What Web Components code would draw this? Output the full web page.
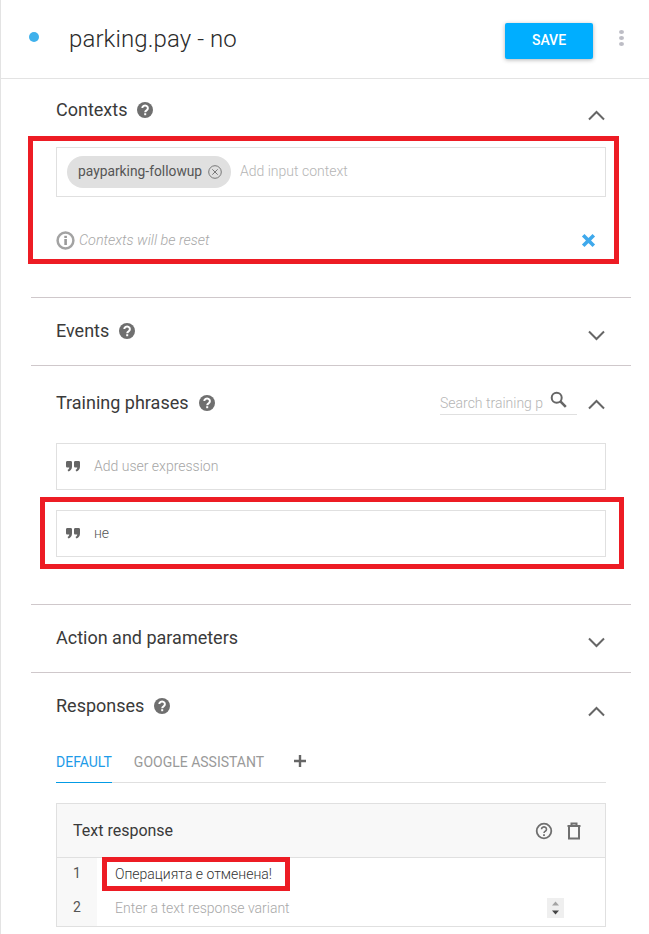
<!DOCTYPE html>
<html>
<head>
<meta charset="utf-8">
<title>parking.pay - no</title>
<style>
    html, body { margin: 0; padding: 0; background: #fff; }
    body { font-family: Roboto, "Liberation Sans", sans-serif; color: #333; width: 649px; height: 934px; overflow: hidden; }
</style>
</head>
<body>
<intent-page>
    <intent-header slot="header" name="parking.pay - no"></intent-header>

    <intent-section name="Contexts" help open head="68" pad="219" title-y="30" chev="36">
        <red-box top="-11" right="-13" bottom="-14" left="-28">
            <context-box></context-box>
        </red-box>
    </intent-section>

    <intent-section name="Events" help head="68" pad="68" title-y="32" chev="37"></intent-section>

    <intent-section name="Training phrases" help open head="77" pad="239" title-y="36" chev="38">
        <phrase-search slot="tools"></phrase-search>
        <phrase-row placeholder>Add user expression</phrase-row>
        <div style="height:20px"></div>
        <red-box top="-13" right="-18" bottom="-12" left="-16">
            <phrase-row>не</phrase-row>
        </red-box>
    </intent-section>

    <intent-section name="Action and parameters" head="68" pad="68" title-y="32" chev="37"></intent-section>

    <intent-section name="Responses" help open head="72" pad="262" title-y="32" chev="38" last>
        <response-tabs></response-tabs>
        <text-response></text-response>
    </intent-section>
</intent-page>

<script>
// icono de ayuda relleno, se repite en varias secciones
const HELP_ICON = `<svg width="18" height="18" viewBox="0 0 18 18"><circle cx="9" cy="9" r="8" fill="#6f6f6f"/><path d="M6.300 7.100a2.800 2.600 0 1 1 4.300 2.200c-.9.600-1.400 1-1.400 2" fill="none" stroke="#fff" stroke-width="2"/><rect x="8.200" y="12.200" width="2" height="2" fill="#fff"/></svg>`;

class IntentPage extends HTMLElement {
    constructor() {
        super();
        this.attachShadow({ mode: 'open' });
        this.shadowRoot.innerHTML = `
            <style>
                :host { display: block; width: 649px; height: 934px; box-sizing: border-box; border-left: 1px solid #e3e3e3; }
                .sections { padding: 0 18px 0 30px; }
            </style>
            <slot name="header"></slot>
            <div class="sections"><slot></slot></div>
        `;
    }
}
customElements.define('intent-page', IntentPage);

class IntentHeader extends HTMLElement {
    constructor() {
        super();
        this.attachShadow({ mode: 'open' });
    }
    connectedCallback() {
        this.shadowRoot.innerHTML = `
            <style>
                :host { display: flex; align-items: center; height: 78px; border-bottom: 1px solid #e3e3e3; box-sizing: content-box; }
                .dot { width: 10px; height: 10px; border-radius: 50%; background: #3fb1ec; margin: 0 30px 4px 28px; }
                h1 { flex: 1; margin: 0; font-size: 24px; font-weight: 300; color: #2b2b2b; letter-spacing: .1px; }
                button { width: 88px; height: 36px; margin-top: 4px; padding: 0 0 2px; border: 0; border-radius: 2px; background: #00aeff; color: #fff; font: 500 14px Roboto, sans-serif; box-shadow: 0 1px 4px rgba(0,0,0,.3); }
                .more { display: flex; flex-direction: column; gap: 2px; margin: 0 25px 2px 26px; }
                .more i { width: 5px; height: 4px; border-radius: 50%; background: #bdbdc5; }
            </style>
            <span class="dot"></span>
            <h1>${this.getAttribute('name')}</h1>
            <button>SAVE</button>
            <span class="more"><i></i><i></i><i></i></span>
        `;
    }
}
customElements.define('intent-header', IntentHeader);

class IntentSection extends HTMLElement {
    constructor() {
        super();
        this.attachShadow({ mode: 'open' });
    }
    connectedCallback() {
        const open = this.hasAttribute('open');
        const head = this.getAttribute('head');
        const total = this.getAttribute('pad');
        const titleY = this.getAttribute('title-y') || 31;
        const chev = this.getAttribute('chev');
        const line = open ? 'M1 9.500 8.500 2l7.500 7.500' : 'M1 1.500 8.500 9 16 1.500';
        this.shadowRoot.innerHTML = `
            <style>
                :host { display: block; height: ${total}px; box-sizing: border-box; padding: 0 25px; border-bottom: ${this.hasAttribute('last') ? '0' : '1px solid #cfc8cb'}; }
                .head { display: flex; height: ${head}px; position: relative; }
                .title { display: flex; align-items: center; gap: 9px; height: 0; margin-top: ${titleY}px; font-size: 18px; color: #3a3a3a; }
                .title svg { display: ${this.hasAttribute('help') ? 'block' : 'none'}; margin-top: 2px; }
                .tools { margin-left: auto; height: 0; }
                .chev { margin: ${chev - 5}px 1px 0 11px; }
            </style>
            <div class="head">
                <div class="title">${this.getAttribute('name')} ${HELP_ICON}</div>
                <div class="tools"><slot name="tools"></slot></div>
                <svg class="chev" width="17" height="11" viewBox="0 0 17 11"><path d="${line}" fill="none" stroke="#666" stroke-width="2"/></svg>
            </div>
            <slot></slot>
        `;
    }
}
customElements.define('intent-section', IntentSection);

// marco rojo sobre el contenido, no afecta el flujo
class RedBox extends HTMLElement {
    constructor() {
        super();
        this.attachShadow({ mode: 'open' });
    }
    connectedCallback() {
        const a = n => this.getAttribute(n);
        this.shadowRoot.innerHTML = `
            <style>
                :host { display: block; position: relative; }
                .frame { position: absolute; top: ${a('top')}px; right: ${a('right')}px; bottom: ${a('bottom')}px; left: ${a('left')}px; border: 5px solid #ed1c24; pointer-events: none; }
            </style>
            <slot></slot>
            <div class="frame"></div>
        `;
    }
}
customElements.define('red-box', RedBox);

class ContextBox extends HTMLElement {
    constructor() {
        super();
        this.attachShadow({ mode: 'open' });
        this.shadowRoot.innerHTML = `
            <style>
                :host { display: block; font-size: 14px; }
                .field { display: flex; align-items: center; height: 50px; box-sizing: border-box; padding-left: 10px; border: 1px solid #e0e0e0; }
                .chip { display: flex; align-items: center; height: 32px; box-sizing: border-box; padding: 0 9px 0 11px; gap: 6px; border-radius: 16px; background: #e0e0e0; color: #555; }
                .chip span { width: 124px; font-size: 13.800px; white-space: nowrap; margin-bottom: 2px; }
                .ph { margin: 0 0 2px 9px; color: #b5b5b5; font-weight: 300; }
                .note { display: flex; align-items: center; height: 20px; margin-top: 33px; color: #a8a8a8; font-size: 14.400px; font-style: italic; font-weight: 300; }
                .note svg:first-child { margin-right: 4px; }
                .note svg:last-child { margin-left: auto; margin-right: 10px; }
            </style>
            <div class="field">
                <span class="chip"><span>payparking-followup</span>
                    <svg width="14" height="14" viewBox="0 0 14 14" fill="none" stroke="#777"><circle cx="7" cy="7" r="6.300"/><path d="M4.300 4.300l5.400 5.400M9.700 4.300l-5.400 5.400"/></svg>
                </span>
                <span class="ph">Add input context</span>
            </div>
            <div class="note">
                <svg width="19" height="19" viewBox="0 0 19 19"><circle cx="9.500" cy="9.500" r="7.900" fill="none" stroke="#a3a3a3" stroke-width="2.500"/><rect x="8.300" y="8" width="2.600" height="6" fill="#9a9a9a"/><rect x="8.300" y="4.800" width="2.600" height="2.200" fill="#9a9a9a"/></svg>
                Contexts will be reset
                <svg width="15" height="15" viewBox="0 0 15 15"><path d="M2.200 2.200l10.600 10.600M12.800 2.200 2.200 12.800" stroke="#3fa9ec" stroke-width="3.600" fill="none"/></svg>
            </div>
        `;
    }
}
customElements.define('context-box', ContextBox);

class PhraseSearch extends HTMLElement {
    constructor() {
        super();
        this.attachShadow({ mode: 'open' });
        this.shadowRoot.innerHTML = `
            <style>
                :host { display: flex; justify-content: space-between; width: 137px; height: 27px; margin-top: 22px; box-sizing: border-box; border-bottom: 1px solid #e0e0e0; font-size: 14px; font-weight: 300; color: #b5b5b5; }
                span { display: block; white-space: nowrap; line-height: 30px; }
                svg { margin: 3px 10px 0 0; }
            </style>
            <span>Search training p</span>
            <svg width="17" height="17" viewBox="0 0 17 17" fill="none" stroke="#666" stroke-width="2"><circle cx="6.700" cy="6.700" r="5"/><path d="M10.400 10.400l5.400 5.400" stroke-width="2.600"/></svg>
        `;
    }
}
customElements.define('phrase-search', PhraseSearch);

class PhraseRow extends HTMLElement {
    constructor() {
        super();
        this.attachShadow({ mode: 'open' });
    }
    connectedCallback() {
        const ph = this.hasAttribute('placeholder');
        this.shadowRoot.innerHTML = `
            <style>
                :host { display: flex; align-items: center; height: 47px; box-sizing: border-box; padding: 0 0 2px 9px; gap: 14px; border: 1px solid #e0e0e0; font-size: 14px; font-weight: 300; color: ${ph ? '#a6a6a6' : '#555'}; }
            </style>
            <svg width="14" height="12" viewBox="0 0 14 12" fill="#666"><path d="M1.500 1h3C5.500 1 6 1.500 6 2.500v4C6 9 4.800 10.500 2.500 11.500L1.500 10C2.800 9.300 3.200 8.500 3.300 7.500H1.500C.5 7.500 0 7 0 6V2.500C0 1.500.5 1 1.500 1zM9.500 1h3c1 0 1.500.5 1.500 1.500v4C14 9 12.800 10.500 10.500 11.500L9.500 10c1.300-.7 1.700-1.500 1.800-2.500H9.500C8.500 7.500 8 7 8 6V2.500C8 1.500 8.500 1 9.500 1z"/></svg>
            <slot></slot>
        `;
    }
}
customElements.define('phrase-row', PhraseRow);

class ResponseTabs extends HTMLElement {
    constructor() {
        super();
        this.attachShadow({ mode: 'open' });
        this.shadowRoot.innerHTML = `
            <style>
                :host { display: flex; height: 38px; box-sizing: border-box; border-bottom: 1px solid #e0e0e0; font-size: 14px; color: #9a9a9a; }
                span { height: 38px; box-sizing: border-box; line-height: 34px; }
                .on { color: #1d9be8; border-bottom: 1px solid #039be5; margin-right: 22px; }
                svg { margin: 9px 0 0 29px; }
            </style>
            <span class="on">DEFAULT</span>
            <span>GOOGLE ASSISTANT</span>
            <svg width="14" height="14" viewBox="0 0 14 14"><path d="M7 1v12M1 7h12" stroke="#666" stroke-width="2.400"/></svg>
        `;
    }
}
customElements.define('response-tabs', ResponseTabs);

class TextResponse extends HTMLElement {
    constructor() {
        super();
        this.attachShadow({ mode: 'open' });
        this.shadowRoot.innerHTML = `
            <style>
                :host { display: block; margin-top: 20px; height: 124px; box-sizing: border-box; border: 1px solid #e0e0e0; font-size: 14px; }
                .top { display: flex; align-items: center; height: 54px; box-sizing: border-box; padding: 0 23px 0 16px; gap: 13px; background: #f8f8f8; border-bottom: 1px solid #e0e0e0; font-size: 16px; color: #3a3a3a; }
                .top b { flex: 1; font-weight: 400; }
                .rows { display: grid; grid-template-columns: 40px 1fr; height: 68px; }
                .nums { background: #f8f8f8; text-align: center; color: #555; }
                .nums div { height: 34px; line-height: 30px; }
                .body { padding-left: 18px; position: relative; }
                .line { height: 34px; line-height: 33px; font-size: 14px; font-weight: 300; color: #333; }
                .ph { color: #a8a8a8; line-height: 32px; }
                .spin { position: absolute; right: 41px; top: 40px; width: 17px; height: 20px; background: #efefef; }
                .mark { position: absolute; left: 5px; top: -1px; width: 188px; height: 34px; box-sizing: border-box; border: 5px solid #ed1c24; }
            </style>
            <div class="top">
                <b>Text response</b>
                <svg width="18" height="18" viewBox="0 0 18 18" fill="none" stroke="#6f6f6f"><circle cx="9" cy="9" r="7.300" stroke-width="1.800"/><path d="M6.500 7.200a2.500 2.300 0 1 1 3.800 2c-.9.600-1.300 1-1.300 1.800" stroke-width="1.600"/><path d="M8.100 12.300h1.800v1.800H8.100z" fill="#6f6f6f" stroke="none"/></svg>
                <svg width="16" height="18" viewBox="0 0 16 18" fill="none" stroke="#6f6f6f" stroke-width="2"><path d="M3 5v11.500h10V5M1.500 4h13M5.500 4V1.500h5V4"/></svg>
            </div>
            <div class="rows">
                <div class="nums"><div>1</div><div>2</div></div>
                <div class="body">
                    <div class="line">Операцията е отменена!</div>
                    <div class="line ph">Enter a text response variant</div>
                    <div class="mark"></div>
                    <div class="spin"><svg width="17" height="20" viewBox="0 0 17 20"><path d="M5 7.500h7L8.500 3.500z" fill="#a3a3a3"/><path d="M5 12.500h7L8.500 16.500z" fill="#444"/></svg></div>
                </div>
            </div>
        `;
    }
}
customElements.define('text-response', TextResponse);
</script>
</body>
</html>
